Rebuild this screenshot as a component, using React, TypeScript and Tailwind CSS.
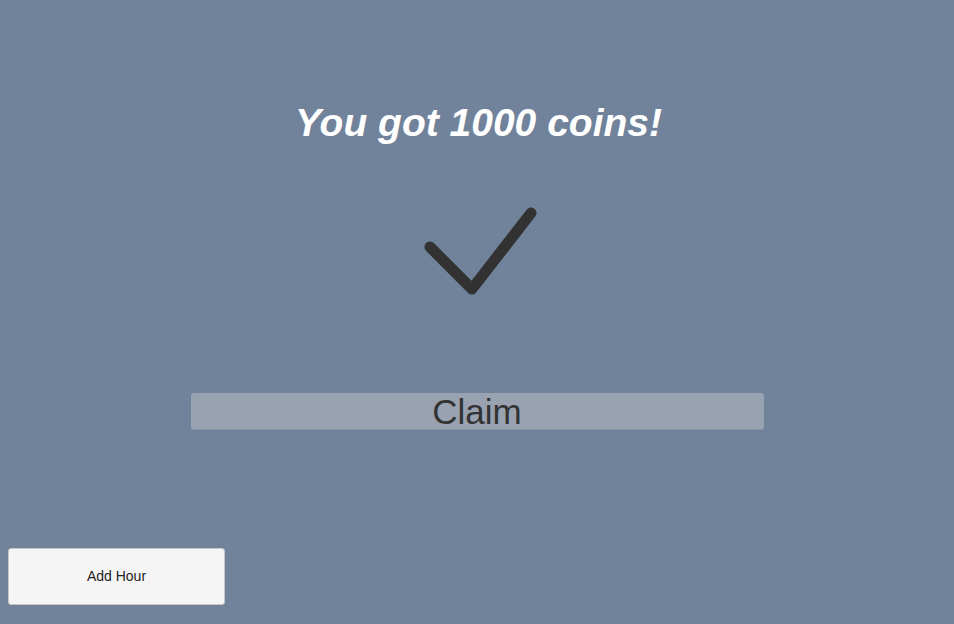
import React from 'react';

const App: React.FC = () => {
  return (
    <div className="w-full h-[624px] bg-[#71829b] flex flex-col items-center font-['Liberation_Sans',Arial,sans-serif] overflow-hidden">
      <h1 className="mt-[101px] ml-[3px] text-[39px] leading-[44px] font-bold italic text-white">
        You got 1000 coins!
      </h1>

      <svg
        width="120"
        height="100"
        viewBox="0 0 120 100"
        className="mt-[55px] blur-[0.7px]"
      >
        <polyline
          points="13,47 55,89 114,13"
          fill="none"
          stroke="#323232"
          strokeWidth="11"
          strokeLinecap="round"
          strokeLinejoin="round"
        />
      </svg>

      <button className="mt-[93px] w-[573px] h-[37px] bg-[#99a2b0] rounded-[3px] border-b border-[#8a93a2] text-[#333] text-[35px] leading-[37px] flex items-center justify-center">
        Claim
      </button>

      <button className="mt-auto mb-[19px] ml-2 self-start w-[217px] h-[57px] bg-[#f5f5f5] border border-[#c8c8c8] rounded-[3px] text-[14px] text-[#222]">
        Add Hour
      </button>
    </div>
  );
};

export default App;
